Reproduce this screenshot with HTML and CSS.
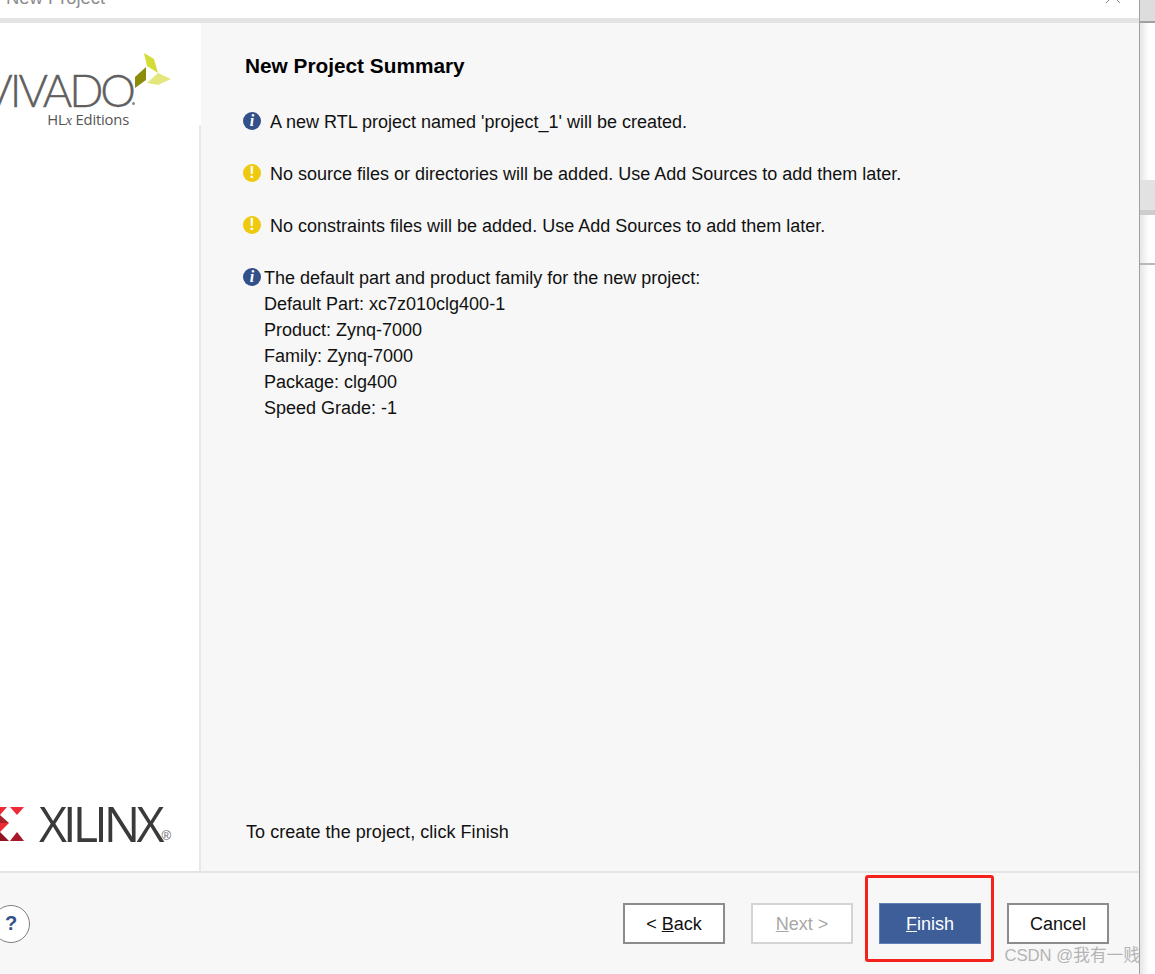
FILE: index.html
```html
<!DOCTYPE html>
<html lang="en">
  <head>
    <meta charset="UTF-8" />
    <title>New Project</title>
    <link rel="stylesheet" href="styles.css">
  </head>
  <body>
    <div class="screen">
      <div class="dialog">
        <div class="title-bar">
          <span class="title-text">New Project</span>
          <svg class="close-icon" width="18" height="18" viewBox="0 0 18 18">
            <path d="M2 2 L16 16 M16 2 L2 16" stroke="#8a8a8a" stroke-width="1" fill="none" />
          </svg>
        </div>

        <div class="main">
          <div class="sidebar">
            <div class="vivado-logo">
              <div class="vivado-text">
                <span class="vivado-name">VIVADO</span>
                <span class="vivado-sub">HL<i>x</i> Editions</span>
              </div>
              <svg class="vivado-mark" width="36" height="36" viewBox="0 0 36 36">
                <path d="M9 0 L19 6 L23 20 L12 13 Z" fill="#d4dc36" />
                <path d="M0 35 L0 24 L11 14 L11 27 Z" fill="#8b8c0a" />
                <path d="M12 30 L23 20 L36 26 L23 32 Z" fill="#e3e77c" />
              </svg>
            </div>
            <div class="xilinx-logo">
              <svg class="xilinx-mark" width="25" height="34" viewBox="0 0 25 34">
                <path d="M0 0 H7 L0 8 Z" fill="#ee2a35" />
                <path d="M10 0 H24 L17 8 Z" fill="#ee2a35" />
                <path d="M0 8 L9 16 H0 Z" fill="#a8222c" />
                <path d="M0 16 H9 L0 25 Z" fill="#ee2a35" />
                <path d="M0 25 L9 34 H0 Z" fill="#8e1620" />
                <path d="M17 25 L24 34 H10 Z" fill="#a8182a" />
              </svg>
              <span class="xilinx-name">XILINX</span>
              <span class="xilinx-reg">&reg;</span>
            </div>
          </div>

          <div class="content">
            <h1>New Project Summary</h1>

            <div class="message">
              <span class="icon info">i</span>
              <span class="message-text">A new RTL project named 'project_1' will be created.</span>
            </div>
            <div class="message">
              <span class="icon warning">!</span>
              <span class="message-text">No source files or directories will be added. Use Add Sources to add them later.</span>
            </div>
            <div class="message">
              <span class="icon warning">!</span>
              <span class="message-text">No constraints files will be added. Use Add Sources to add them later.</span>
            </div>
            <div class="message last">
              <span class="icon info">i</span>
              <div class="part-lines">
                <div>The default part and product family for the new project:</div>
                <div>Default Part: xc7z010clg400-1</div>
                <div>Product: Zynq-7000</div>
                <div>Family: Zynq-7000</div>
                <div>Package: clg400</div>
                <div>Speed Grade: -1</div>
              </div>
            </div>

            <div class="finish-hint">To create the project, click Finish</div>
          </div>
        </div>

        <div class="footer">
          <button class="help-button">?</button>
          <div class="nav-buttons">
            <button class="btn">&lt; <u>B</u>ack</button>
            <button class="btn disabled"><u>N</u>ext &gt;</button>
            <button class="btn primary"><u>F</u>inish</button>
            <button class="btn">Cancel</button>
          </div>
        </div>
      </div>

      <div class="behind">
        <div class="behind-top"></div>
        <div class="behind-band"></div>
        <div class="behind-line"></div>
      </div>

      <div class="highlight-box"></div>
      <div class="watermark">CSDN @我有一贱</div>
    </div>
  </body>
</html>
```

FILE: styles.css
```css
body {
  margin: 0;
  padding: 0;
  font-family: 'Liberation Sans', Arial, sans-serif;
  background-color: #ffffff;
  overflow: hidden;
}

.screen {
  position: relative;
  display: flex;
  width: 1155px;
  height: 974px;
  overflow: hidden;
}

.dialog {
  display: flex;
  flex-direction: column;
  width: 1139px;
  background-color: #f7f7f7;
  border-right: 1px solid #a0a0a0;
  box-sizing: content-box;
}

.title-bar {
  position: relative;
  flex: none;
  height: 18px;
  background-color: #ffffff;
  border-bottom: 5px solid #e4e4e4;
  overflow: hidden;
}

.title-text {
  display: block;
  margin-top: -12px;
  margin-left: 6px;
  font-size: 18.4px;
  line-height: 20px;
  color: #8c8c8c;
}

.close-icon {
  position: absolute;
  top: -13px;
  right: 17px;
}

.main {
  flex: 1;
  display: flex;
  min-height: 0;
}

.sidebar {
  flex: none;
  display: flex;
  flex-direction: column;
  justify-content: space-between;
  width: 201px;
  background: #ffffff linear-gradient(#e8e8e8, #e8e8e8) no-repeat right 102px / 2px 100%;
  overflow: hidden;
}

.vivado-logo {
  display: flex;
  justify-content: flex-end;
  height: 102px;
  padding-right: 30px;
}

.vivado-text {
  flex: none;
  display: flex;
  flex-direction: column;
  align-items: flex-end;
  margin-top: 45px;
  white-space: nowrap;
}

.vivado-name {
  position: relative;
  font-family: 'Lato', sans-serif;
  font-weight: 300;
  font-size: 45px;
  line-height: 45px;
  letter-spacing: -3px;
  color: #5f5f5f;
  -webkit-text-stroke: 0.4px #5f5f5f;
}

/* tiny registered mark after the wordmark */
.vivado-name::after {
  content: "";
  position: absolute;
  right: -2px;
  bottom: 8px;
  width: 3px;
  height: 3px;
  border-radius: 50%;
  background-color: #8a8a8a;
}

.vivado-sub {
  margin-top: -3px;
  margin-right: 4px;
  font-family: 'Open Sans', sans-serif;
  font-size: 14.8px;
  line-height: 18px;
  letter-spacing: -0.2px;
  color: #555555;
}

.vivado-sub i {
  font-family: 'Liberation Serif', serif;
}

.vivado-mark {
  flex: none;
  margin-top: 30px;
  margin-left: 2px;
}

.xilinx-logo {
  display: flex;
  align-items: center;
  height: 36px;
  margin-bottom: 30px;
}

.xilinx-mark {
  flex: none;
  align-self: flex-end;
}

.xilinx-name {
  margin-left: 14px;
  font-family: 'Open Sans', sans-serif;
  font-size: 48.5px;
  line-height: 36px;
  letter-spacing: -3.9px;
  color: #3a3a3a;
}

.xilinx-reg {
  margin-left: 1px;
  align-self: flex-end;
  font-size: 13px;
  line-height: 10px;
  color: #666666;
}

.content {
  flex: 1;
  display: flex;
  flex-direction: column;
  padding: 30px 0 0 42px;
  background-color: #f7f7f7;
}

h1 {
  margin: 0 0 30px 2px;
  font-size: 20.8px;
  line-height: 26px;
  font-weight: 700;
  color: #000000;
}

.message {
  display: flex;
  align-items: flex-start;
  margin-bottom: 26px;
  font-size: 18px;
  line-height: 26px;
  color: #111111;
}

.message.last {
  margin-bottom: 0;
}

.message-text {
  margin-left: 9px;
}

.part-lines {
  margin-left: 3px;
}

.icon {
  flex: none;
  width: 18px;
  height: 18px;
  margin-top: 3px;
  border-radius: 50%;
  font-size: 16px;
  line-height: 18px;
  font-weight: 700;
  text-align: center;
}

.icon.info {
  background-color: #33508a;
  color: #ffffff;
  font-family: 'Liberation Serif', serif;
  font-style: italic;
}

.icon.warning {
  background-color: #eec90f;
  color: #ffffff;
}

.finish-hint {
  margin-top: auto;
  margin-bottom: 26px;
  margin-left: 3px;
  font-size: 18px;
  line-height: 26px;
  letter-spacing: 0.05px;
  color: #111111;
}

.footer {
  flex: none;
  display: flex;
  align-items: center;
  justify-content: space-between;
  height: 101px;
  border-top: 2px solid #e4e4e4;
  background-color: #f7f7f7;
}

.help-button {
  width: 38px;
  height: 38px;
  margin-left: -8px;
  padding: 0;
  border: 1px solid #808080;
  border-radius: 50%;
  background-color: #ffffff;
  color: #33508a;
  font-family: 'Liberation Sans', Arial, sans-serif;
  font-size: 20px;
  font-weight: 700;
}

.nav-buttons {
  display: flex;
  gap: 26px;
  margin-right: 30px;
}

.btn {
  width: 102px;
  height: 41px;
  padding: 1px 0 0;
  border: 2px solid #8c8c8c;
  background-color: #ffffff;
  color: #111111;
  font-family: 'Liberation Sans', Arial, sans-serif;
  font-size: 18px;
}

.btn.disabled {
  border-color: #d4d4d4;
  color: #a8a8a8;
}

.btn.primary {
  border: 1px solid #5f7fb5;
  background-color: #3e5e9a;
  color: #ffffff;
}

.behind {
  flex: 1;
  display: flex;
  flex-direction: column;
  background: linear-gradient(to right, #e6e6e6, #fcfcfc 8px, #ffffff);
}

.behind-top {
  height: 21px;
  background-color: #dddddd;
  border-bottom: 2px solid #a0a0a0;
}

.behind-band {
  height: 30px;
  margin-top: 157px;
  background-color: #e2e2e2;
  border-bottom: 5px solid #cdcdcd;
}

.behind-line {
  height: 2px;
  margin-top: 48px;
  background-color: #b8b8b8;
}

.highlight-box {
  position: absolute;
  left: 865px;
  top: 875px;
  width: 123px;
  height: 81px;
  border: 3px solid #f5221b;
  border-radius: 3px;
}

.watermark {
  position: absolute;
  right: 15px;
  top: 946px;
  font-family: 'Liberation Sans', 'Noto Sans CJK SC', sans-serif;
  font-size: 16.7px;
  line-height: 20px;
  color: #b4b4b4;
  white-space: nowrap;
}
```
